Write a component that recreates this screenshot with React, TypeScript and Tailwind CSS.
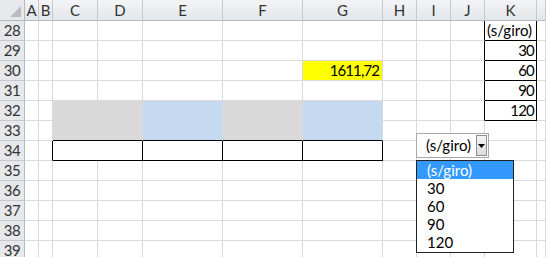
import React from "react";

const cols = ["A", "B", "C", "D", "E", "F", "G", "H", "I", "J", "K", ""];

type C = { cls: string; content?: React.ReactNode };

function cell(opts: { rb?: boolean; bb?: boolean; bg?: string; extra?: string }) {
  const r = opts.rb ? "border-r-black" : "border-r-[#d9dadc]";
  const b = opts.bb ? "border-b-black" : "border-b-[#d9dadc]";
  const bg = opts.bg ?? "bg-white";
  return `border-r border-b ${r} ${b} ${bg} ${opts.extra ?? ""}`;
}

export default function App() {
  const rows: { n: number; cells: C[] }[] = [];
  for (let n = 28; n <= 39; n++) {
    const cells: C[] = [];
    const isK = n >= 28 && n <= 32;
    if (n === 32) {
      cells.push({ cls: cell({}) }); // A
      cells.push({ cls: cell({}) }); // B
      cells.push({ cls: cell({ bb: true, bg: "bg-[#d9d9d9]", extra: "col-span-2 row-span-2" }) });
      cells.push({ cls: cell({ bb: true, bg: "bg-[#c5d9f1]", extra: "row-span-2" }) });
      cells.push({ cls: cell({ bb: true, bg: "bg-[#d9d9d9]", extra: "row-span-2" }) });
      cells.push({ cls: cell({ bb: true, bg: "bg-[#c5d9f1]", extra: "row-span-2" }) });
      cells.push({ cls: cell({}) }); // H
      cells.push({ cls: cell({}) }); // I
      cells.push({ cls: cell({ rb: true }) }); // J
      cells.push({
        cls: cell({ rb: true, bb: true, extra: "justify-end pr-[2px] tracking-[-0.8px]" }),
        content: "120",
      });
      cells.push({ cls: cell({}) });
    } else if (n === 33) {
      for (let i = 0; i < 7; i++) cells.push({ cls: cell({}) });
    } else if (n === 34) {
      cells.push({ cls: cell({}) });
      cells.push({ cls: cell({ rb: true }) });
      cells.push({ cls: cell({ rb: true, bb: true, extra: "col-span-2" }) });
      cells.push({ cls: cell({ rb: true, bb: true }) });
      cells.push({ cls: cell({ rb: true, bb: true }) });
      cells.push({ cls: cell({ rb: true, bb: true }) });
      for (let i = 0; i < 5; i++) cells.push({ cls: cell({}) });
    } else {
      for (let i = 0; i < 12; i++) {
        const col = cols[i];
        if (col === "G" && n === 30) {
          cells.push({
            cls: cell({ bg: "bg-[#ffff00]", extra: "justify-end pr-[3px] tracking-[-0.9px]" }),
            content: "1611,72",
          });
        } else if (col === "J" && isK) {
          cells.push({ cls: cell({ rb: true }) });
        } else if (col === "K" && isK) {
          const txt = n === 28 ? "(s/giro)" : n === 29 ? "30" : n === 30 ? "60" : "90";
          cells.push({
            cls: cell({
              rb: true,
              bb: true,
              extra: n === 28 ? "justify-start pl-[2px]" : "justify-end pr-[2px] tracking-[-0.8px]",
            }),
            content: txt,
          });
        } else {
          cells.push({ cls: cell({}) });
        }
      }
    }
    rows.push({ n, cells });
  }

  return (
    <div
      className="relative w-[546px] h-[257px] overflow-hidden bg-white text-[15px] text-black"
      style={{ fontFamily: "Lato, 'Open Sans', sans-serif" }}
    >
      <div className="grid grid-cols-[25px_14px_14px_45px_45px_80px_80px_80px_34px_34px_34px_52px_9px] grid-rows-[21px_repeat(12,20px)]">
        <div className="relative border-r border-b border-r-[#b5bac1] border-b-[#b5bac1] bg-[#e6e8ec]">
          <svg className="absolute right-[3px] bottom-[3px]" width="11" height="11" viewBox="0 0 11 11">
            <polygon points="11,0 11,11 0,11" fill="#b9bdc3" />
          </svg>
        </div>
        {cols.map((c, i) => (
          <div
            key={"h" + i}
            className="flex items-center justify-center border-r border-b border-r-[#c5c9cf] border-b-[#b5bac1] bg-gradient-to-b from-[#f3f4f6] to-[#e3e6ea] text-[15px] text-[#333]"
          >
            {c}
          </div>
        ))}
        {rows.map((r) => (
          <React.Fragment key={r.n}>
            <div className="flex items-center justify-center border-r border-b border-r-[#b5bac1] border-b-[#c5c9cf] bg-[#e6e8ec] text-[15px] text-[#333] tracking-[-0.5px]">
              {r.n}
            </div>
            {r.cells.map((c, i) => (
              <div key={i} className={`flex items-center leading-none ${c.cls}`}>
                {c.content}
              </div>
            ))}
          </React.Fragment>
        ))}
      </div>

      <div className="absolute left-[416px] top-[133px] w-[73px] h-[25px] border border-[#a9a9a9] bg-white flex items-center">
        <span className="pl-[9px] flex-1 leading-none">(s/giro)</span>
        <div className="mr-[1px] w-[11px] h-[21px] border border-[#8e8f8f] bg-gradient-to-b from-[#f4f4f4] to-[#dcdcdc] flex items-center justify-center">
          <svg width="7" height="4" viewBox="0 0 7 4">
            <polygon points="0,0 7,0 3.5,4" fill="#000" />
          </svg>
        </div>
      </div>

      <div className="absolute left-[416px] top-[160px] w-[98px] h-[93px] border border-[#222] bg-white flex flex-col">
        {["(s/giro)", "30", "60", "90", "120"].map((t, i) => (
          <div
            key={t}
            className={`h-[18px] flex items-center pl-[10px] leading-none ${
              i === 0 ? "bg-[#3399ff] text-white" : "text-black"
            }`}
          >
            {t}
          </div>
        ))}
      </div>
    </div>
  );
}
